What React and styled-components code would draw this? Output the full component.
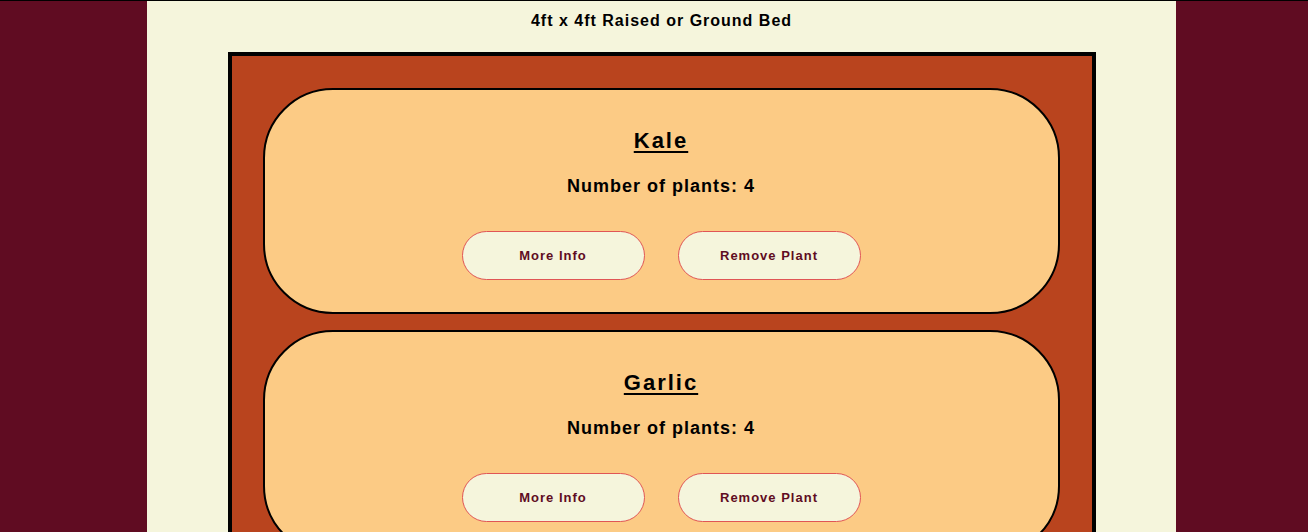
import React from "react";
import styled, { createGlobalStyle } from "styled-components";

const Global = createGlobalStyle`
  html, body { margin: 0; padding: 0; }
  body {
    background: #600c22;
    font-family: "Liberation Sans", Arial, sans-serif;
    border-top: 1px solid #000;
    overflow: hidden;
  }
`;

const Page = styled.main`
  margin-left: 147px;
  width: 1029px;
  min-height: 531px;
  background: #f5f5dc;
  display: flex;
  flex-direction: column;
  align-items: center;
  box-sizing: border-box;
  padding-top: 10px;
`;

const BedTitle = styled.h3`
  margin: 0 0 22px;
  font-size: 16px;
  font-weight: 700;
  letter-spacing: 1px;
  line-height: 19px;
  color: #000;
`;

const Bed = styled.section`
  width: 797px;
  border: 4px solid #000;
  background: #b9441e;
  padding: 32px 32px 32px 31px;
  box-sizing: content-box;
  display: flex;
  flex-direction: column;
  gap: 16px;
`;

const Card = styled.article`
  height: 226px;
  box-sizing: border-box;
  border: 2px solid #000;
  border-radius: 70px;
  background: #fccb85;
  display: flex;
  flex-direction: column;
  align-items: center;
  padding-top: 37px;
  flex-shrink: 0;
`;

const PlantName = styled.h2`
  margin: 0;
  font-size: 22px;
  line-height: 27px;
  font-weight: 700;
  letter-spacing: 2px;
  text-decoration: underline;
  text-underline-offset: 3px;
  color: #000;
`;

const Count = styled.p`
  margin: 22px 0 0;
  font-size: 18px;
  line-height: 21px;
  font-weight: 700;
  letter-spacing: 1px;
  color: #000;
`;

const Actions = styled.div`
  display: flex;
  gap: 33px;
  margin-top: 34px;
`;

const Button = styled.button`
  width: 183px;
  height: 49px;
  border: 1px solid #e05555;
  border-radius: 25px;
  background: #f5f5dc;
  color: #600c22;
  font-family: "Liberation Sans", Arial, sans-serif;
  font-size: 13px;
  font-weight: 700;
  letter-spacing: 1px;
  cursor: pointer;
`;

const plants = [
  { name: "Kale", count: 4 },
  { name: "Garlic", count: 4 },
];

export default function App() {
  return (
    <>
      <Global />
      <Page>
        <BedTitle>4ft x 4ft Raised or Ground Bed</BedTitle>
        <Bed>
          {plants.map((p) => (
            <Card key={p.name}>
              <PlantName>{p.name}</PlantName>
              <Count>Number of plants: {p.count}</Count>
              <Actions>
                <Button>More Info</Button>
                <Button>Remove Plant</Button>
              </Actions>
            </Card>
          ))}
        </Bed>
      </Page>
    </>
  );
}
